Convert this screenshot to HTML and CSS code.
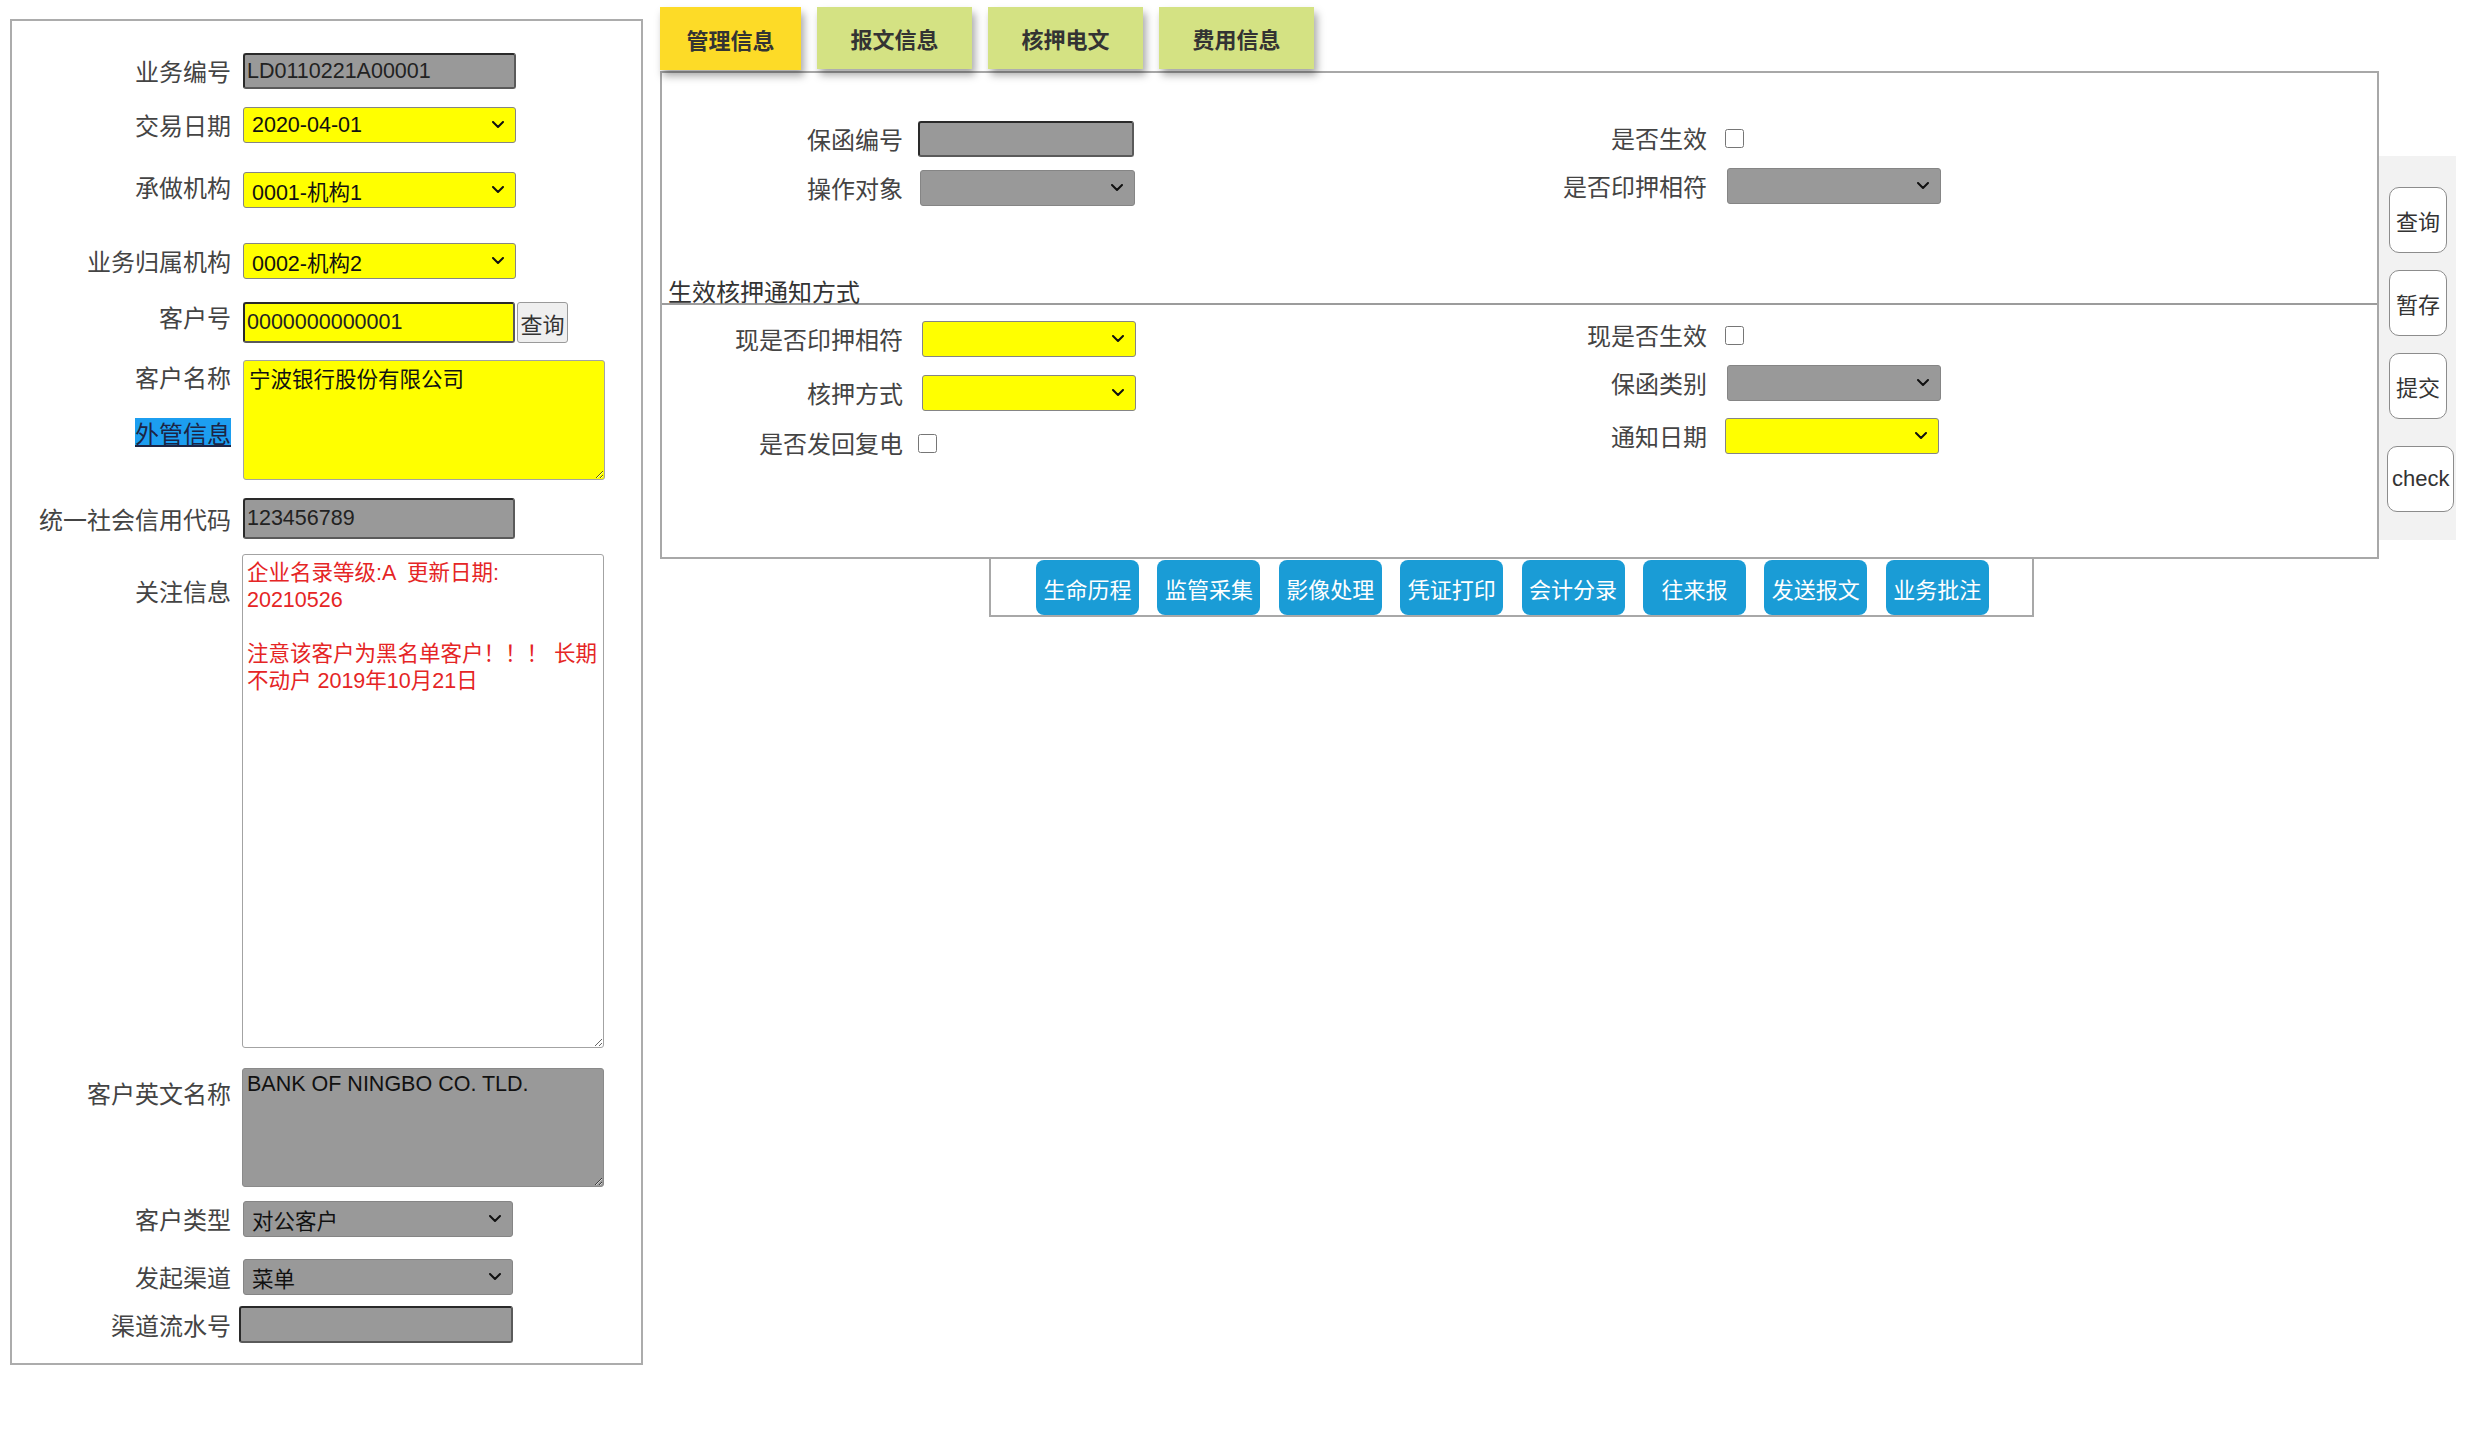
FILE: index.html
```html
<!DOCTYPE html>
<html lang="zh-CN">
<head>
<meta charset="utf-8">
<title>管理信息</title>
<link rel="stylesheet" href="styles.css">
</head>
<body>
<div class="page">
  <aside class="cust-panel">
    <div class="frow">
      <span class="flabel">业务编号</span>
      <input class="tin gray w273" value="LD0110221A00001" readonly>
    </div>
    <div class="frow row-date">
      <span class="flabel">交易日期</span>
      <div class="sel yellow w273 h37"><span>2020-04-01</span><svg viewBox="0 0 12 8"><polyline points="1,1 6,6 11,1"/></svg></div>
    </div>
    <div class="frow row-org">
      <span class="flabel">承做机构</span>
      <div class="sel yellow w273 h35"><span>0001-机构1</span><svg viewBox="0 0 12 8"><polyline points="1,1 6,6 11,1"/></svg></div>
    </div>
    <div class="frow row-owner">
      <span class="flabel">业务归属机构</span>
      <div class="sel yellow w273 h35"><span>0002-机构2</span><svg viewBox="0 0 12 8"><polyline points="1,1 6,6 11,1"/></svg></div>
    </div>
    <div class="frow row-custno">
      <span class="flabel">客户号</span>
      <input class="tin yellow w272 h41" value="0000000000001">
      <button class="qbtn">查询</button>
    </div>
    <div class="frow row-name">
      <div class="lblcol">
        <span class="flabel-t pad2">客户名称</span>
        <a class="fx-link">外管信息</a>
      </div>
      <textarea class="ta yellow ta-name">宁波银行股份有限公司</textarea>
    </div>
    <div class="frow row-credit">
      <span class="flabel">统一社会信用代码</span>
      <input class="tin gray w272 h41" value="123456789" readonly>
    </div>
    <div class="frow row-focus">
      <span class="flabel pad22">关注信息</span>
      <textarea class="ta ta-focus" readonly>企业名录等级:A  更新日期:
20210526

注意该客户为黑名单客户！！！ 长期
不动户 2019年10月21日</textarea>
    </div>
    <div class="frow row-en">
      <span class="flabel pad10">客户英文名称</span>
      <textarea class="ta gray ta-en" readonly>BANK OF NINGBO CO. TLD.</textarea>
    </div>
    <div class="frow row-type">
      <span class="flabel">客户类型</span>
      <div class="sel gray w270"><span>对公客户</span><svg viewBox="0 0 12 8"><polyline points="1,1 6,6 11,1"/></svg></div>
    </div>
    <div class="frow row-chan">
      <span class="flabel">发起渠道</span>
      <div class="sel gray w270"><span>菜单</span><svg viewBox="0 0 12 8"><polyline points="1,1 6,6 11,1"/></svg></div>
    </div>
    <div class="frow row-serial">
      <span class="flabel">渠道流水号</span>
      <input class="tin gray w274 h37 shift-l" value="" readonly>
    </div>
  </aside>

  <main class="main">
    <nav class="tabs">
      <div class="tab active">管理信息</div>
      <div class="tab">报文信息</div>
      <div class="tab">核押电文</div>
      <div class="tab">费用信息</div>
    </nav>
    <section class="panel">
      <div class="upper">
        <div class="col-a">
          <div class="mrow">
            <span class="mlabel">保函编号</span>
            <input class="tin gray w216" value="" readonly>
          </div>
          <div class="mrow mt12 h37r">
            <span class="mlabel">操作对象</span>
            <div class="sel gray w215 h37 nudge2"><span></span><svg viewBox="0 0 12 8"><polyline points="1,1 6,6 11,1"/></svg></div>
          </div>
        </div>
        <div class="col-b">
          <div class="mrow up2">
            <span class="mlabel">是否生效</span>
            <input type="checkbox" class="chk">
          </div>
          <div class="mrow mt12">
            <span class="mlabel">是否印押相符</span>
            <div class="sel gray w214 nudge2"><span></span><svg viewBox="0 0 12 8"><polyline points="1,1 6,6 11,1"/></svg></div>
          </div>
        </div>
      </div>
      <div class="sec-title">生效核押通知方式</div>
      <div class="lower">
        <div class="col-a pt16">
          <div class="mrow">
            <span class="mlabel">现是否印押相符</span>
            <div class="sel yellow w214 nudge4"><span></span><svg viewBox="0 0 12 8"><polyline points="1,1 6,6 11,1"/></svg></div>
          </div>
          <div class="mrow mt18">
            <span class="mlabel">核押方式</span>
            <div class="sel yellow w214 nudge4"><span></span><svg viewBox="0 0 12 8"><polyline points="1,1 6,6 11,1"/></svg></div>
          </div>
          <div class="mrow mt14">
            <span class="mlabel">是否发回复电</span>
            <input type="checkbox" class="chk nudge4">
          </div>
        </div>
        <div class="col-b pt12">
          <div class="mrow">
            <span class="mlabel">现是否生效</span>
            <input type="checkbox" class="chk">
          </div>
          <div class="mrow mt12">
            <span class="mlabel">保函类别</span>
            <div class="sel gray w214 nudge2"><span></span><svg viewBox="0 0 12 8"><polyline points="1,1 6,6 11,1"/></svg></div>
          </div>
          <div class="mrow mt17">
            <span class="mlabel">通知日期</span>
            <div class="sel yellow w214"><span></span><svg viewBox="0 0 12 8"><polyline points="1,1 6,6 11,1"/></svg></div>
          </div>
        </div>
      </div>
    </section>
    <div class="btnbar">
      <button class="bbtn">生命历程</button>
      <button class="bbtn">监管采集</button>
      <button class="bbtn">影像处理</button>
      <button class="bbtn">凭证打印</button>
      <button class="bbtn">会计分录</button>
      <button class="bbtn">往来报</button>
      <button class="bbtn">发送报文</button>
      <button class="bbtn">业务批注</button>
    </div>
  </main>

  <aside class="side">
    <button class="sbtn">查询</button>
    <button class="sbtn">暂存</button>
    <button class="sbtn">提交</button>
    <button class="sbtn check">check</button>
  </aside>
</div>
</body>
</html>
```

FILE: styles.css
```css
* { box-sizing: border-box; }
html, body { margin: 0; padding: 0; background: #fff; }
body {
  font-family: "Liberation Sans", "Noto Sans CJK SC", sans-serif;
  color: #333;
}
.page { display: flex; align-items: flex-start; }

/* ---------- left customer panel ---------- */
.cust-panel {
  flex: none;
  width: 633px;
  margin: 19px 0 0 10px;
  border: 2px solid #acacac;
  padding: 32px 0 20px 0;
  display: flex;
  flex-direction: column;
}
.frow { display: flex; align-items: center; }
.flabel, .lblcol {
  flex: none;
  width: 219px;
  margin-right: 12px;
  text-align: right;
  font-size: 24px;
  line-height: 30px;
  color: #444;
  font-family: "Noto Sans CJK SC", sans-serif;
}
.lblcol { display: flex; flex-direction: column; align-items: flex-end; }
.flabel-t { display: block; }
.pad2 { padding-top: 2px; }
.pad10 { align-self: flex-start; padding-top: 10px; }
.pad22 { align-self: flex-start; padding-top: 22px; }
.fx-link {
  margin-top: 26px;
  display: inline-block;
  line-height: 29px;
  height: 29px;
  background: #1c9ef0;
  color: #1c2444;
  text-decoration: underline;
}

.row-date { margin-top: 18px; }
.row-org { margin-top: 29px; }
.row-org .flabel { align-self: flex-start; }
.row-owner { margin-top: 35px; }
.row-custno { margin-top: 23px; }
.row-custno .flabel { align-self: flex-start; }
.row-name { margin-top: 17px; align-items: flex-start; }
.row-credit { margin-top: 18px; }
.row-focus { margin-top: 15px; align-items: flex-start; }
.row-en { margin-top: 20px; align-items: flex-start; }
.row-type { margin-top: 14px; }
.row-chan { margin-top: 22px; }
.row-serial { margin-top: 11px; }

/* ---------- controls ---------- */
.tin {
  display: block;
  flex: none;
  height: 36px;
  margin: 0;
  padding: 0 2px;
  border: 2px solid;
  border-color: #2a2a2a #5a5a5a #5a5a5a #2a2a2a;
  border-radius: 3px;
  font: 21.5px "Liberation Sans", "Noto Sans CJK SC", sans-serif;
  color: #222;
  outline: none;
}
.gray { background: #999999; }
.yellow { background: #ffff00; }
.w273 { width: 273px; }
.w272 { width: 272px; }
.w274 { width: 274px; }
.w270 { width: 270px; }
.w216 { width: 216px; }
.w215 { width: 215px; }
.w214 { width: 214px; }
.h41 { height: 41px; }
.h37 { height: 37px; }
.h35 { height: 35px; }
.shift-l { margin-left: -4px; }

.sel {
  flex: none;
  display: flex;
  align-items: center;
  justify-content: space-between;
  height: 36px;
  padding: 0 11px 0 8px;
  border: 1px solid #858585;
  border-radius: 3px;
  font-size: 21.5px;
  color: #111;
}
.sel svg { width: 12px; height: 8px; flex: none; }
.sel polyline { fill: none; stroke: #111; stroke-width: 2; stroke-linecap: round; stroke-linejoin: round; }

.qbtn {
  flex: none;
  width: 51px;
  height: 41px;
  margin: 0 0 0 2px;
  padding: 0;
  border: 1px solid #9a9a9a;
  border-radius: 3px;
  background: #efefef;
  font: 22px "Noto Sans CJK SC", sans-serif;
  color: #333;
}

.ta {
  display: block;
  flex: none;
  margin: 0;
  width: 362px;
  border: 1px solid #a3a3a3;
  border-radius: 3px;
  font: 21.5px/27px "Liberation Sans", "Noto Sans CJK SC", sans-serif;
  color: #111;
  white-space: pre;
  overflow: hidden;
  resize: both;
  outline: none;
}
.ta-name { height: 120px; padding: 6px 5px; }
.ta-focus { height: 494px; padding: 5px 4px; color: #e52525; background: #fff; margin-left: -1px; }
.ta-en { height: 119px; padding: 2px 4px; margin-left: -1px; border-color: #8a8a8a; }

/* ---------- main area ---------- */
.main { flex: none; width: 1719px; margin: 7px 0 0 17px; }
.tabs { display: flex; align-items: flex-start; gap: 16px; height: 64px; }
.tab {
  position: relative;
  z-index: 1;
  width: 155px;
  height: 62px;
  background: #d4e283;
  display: flex;
  align-items: center;
  justify-content: center;
  font: bold 22px "Noto Sans CJK SC", sans-serif;
  color: #333;
  box-shadow: 3px 6px 8px rgba(0, 0, 0, 0.35);
}
.tab.active { width: 141px; height: 63px; background: #fddb27; }

.panel {
  height: 488px;
  border: 2px solid #a8a8a8;
  background: #fff;
}
.upper { display: flex; height: 206px; padding-top: 48px; }
.lower { display: flex; }
.col-a { flex: none; width: 845px; }
.col-b { flex: 1; }
.pt16 { padding-top: 16px; }
.pt12 { padding-top: 12px; }
.mrow { display: flex; align-items: center; height: 36px; }
.h37r { height: 37px; }
.mt12 { margin-top: 12px; }
.mt14 { margin-top: 14px; }
.mt17 { margin-top: 17px; }
.mt18 { margin-top: 18px; }
.up2 { margin-top: -1px; }
.mlabel {
  flex: none;
  text-align: right;
  font: 24px/30px "Noto Sans CJK SC", sans-serif;
  color: #444;
}
.col-a .mlabel { width: 241px; margin-right: 15px; }
.col-b .mlabel { width: 200px; margin-right: 18px; }
.nudge2 { margin-left: 2px; }
.nudge4 { margin-left: 4px; }
.chk {
  flex: none;
  width: 19px;
  height: 19px;
  margin: 0;
}

.sec-title {
  height: 26px;
  border-bottom: 2px solid #9c9c9c;
  padding-left: 6px;
  font: 24px/24px "Noto Sans CJK SC", sans-serif;
  color: #333;
}

.btnbar {
  display: flex;
  gap: 18.4px;
  width: 1045px;
  height: 58px;
  margin-left: 329px;
  padding: 1px 0 0 45px;
  border: 2px solid #a8a8a8;
  border-top: none;
}
.bbtn {
  flex: none;
  width: 103px;
  height: 55px;
  padding: 0;
  border: none;
  border-radius: 8px;
  background: #1a9cd6;
  color: #fff;
  font: 22px "Noto Sans CJK SC", sans-serif;
}

/* ---------- right action strip ---------- */
.side {
  flex: none;
  width: 77px;
  height: 384px;
  margin-top: 156px;
  padding: 31px 0 0 10px;
  background: #f2f2f2;
  display: flex;
  flex-direction: column;
  align-items: flex-start;
  gap: 17px;
}
.sbtn {
  height: 66px;
  margin: 0;
  padding: 0 6px;
  border: 1px solid #8c8c8c;
  border-radius: 10px;
  background: #fff;
  font: 22px "Liberation Sans", "Noto Sans CJK SC", sans-serif;
  color: #333;
}
.sbtn.check { padding: 0 4px; margin: 10px 0 0 -2px; }
```
